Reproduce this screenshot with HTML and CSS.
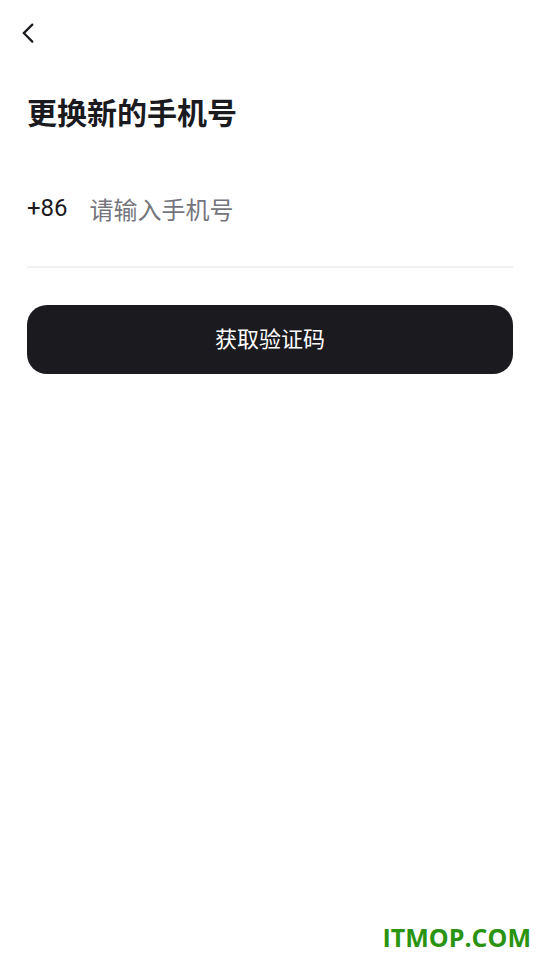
FILE: index.html
```html
<!DOCTYPE html>
<html lang="zh-CN">
<head>
    <meta charset="UTF-8">
    <meta name="viewport" content="width=device-width, initial-scale=1.0">
    <title>更换新的手机号</title>
    <link rel="stylesheet" href="styles.css">
</head>
<body>
    <header class="nav">
        <button type="button" class="back-btn" aria-label="返回">
            <svg width="12" height="20" viewBox="0 0 12 20" fill="none" stroke="#1a1a1f" stroke-width="2.2" stroke-linecap="round">
                <path d="M10.3 1.6 L1.8 10.1 L10.3 18.6"/>
            </svg>
        </button>
    </header>

    <main>
        <h1>更换新的手机号</h1>
        <form>
            <div class="phone-row">
                <label class="code" for="phone">+86</label>
                <input id="phone" type="tel" placeholder="请输入手机号">
            </div>
            <button type="submit" class="submit-btn">获取验证码</button>
        </form>
    </main>

    <footer>ITMOP.COM</footer>
</body>
</html>
```

FILE: styles.css
```css
* {
    box-sizing: border-box;
}
body {
    display: flex;
    flex-direction: column;
    min-height: 100vh;
    margin: 0;
    background-color: #fff;
    color: #1a1a1f;
    font-family: Roboto, "Noto Sans CJK SC", sans-serif;
}
button {
    border: none;
    cursor: pointer;
    font-family: inherit;
}
.nav {
    display: flex;
    align-items: center;
    height: 66px;
    padding: 0 22px;
}
.back-btn {
    display: flex;
    padding: 0;
    background: none;
}
main {
    flex: 1;
    padding: 26px 27px 0;
}
h1 {
    margin: 0 0 46px;
    font-size: 30px;
    line-height: 44px;
    font-weight: 700;
}
.phone-row {
    display: flex;
    align-items: flex-start;
    gap: 22px;
    height: 86px;
    padding-top: 10px;
    border-bottom: 2px solid #f1f1f1;
}
.code {
    font-size: 24px;
    line-height: 32px;
}
#phone {
    flex: 1;
    min-width: 0;
    height: 38px;
    padding: 0;
    border: none;
    outline: none;
    background: none;
    color: #1a1a1f;
    font-family: inherit;
    font-size: 24px;
    line-height: 38px;
}
#phone::placeholder {
    color: #75757d;
}
.submit-btn {
    width: 100%;
    height: 69px;
    margin-top: 37px;
    padding: 0 0 6px;
    border-radius: 20px;
    background-color: #1a1a1f;
    color: #fff;
    font-size: 22px;
}
footer {
    padding: 0 9px 5px;
    color: #2a9410;
    font-family: "Open Sans", sans-serif;
    font-size: 25px;
    line-height: 36px;
    font-weight: 700;
    text-align: right;
}
```
